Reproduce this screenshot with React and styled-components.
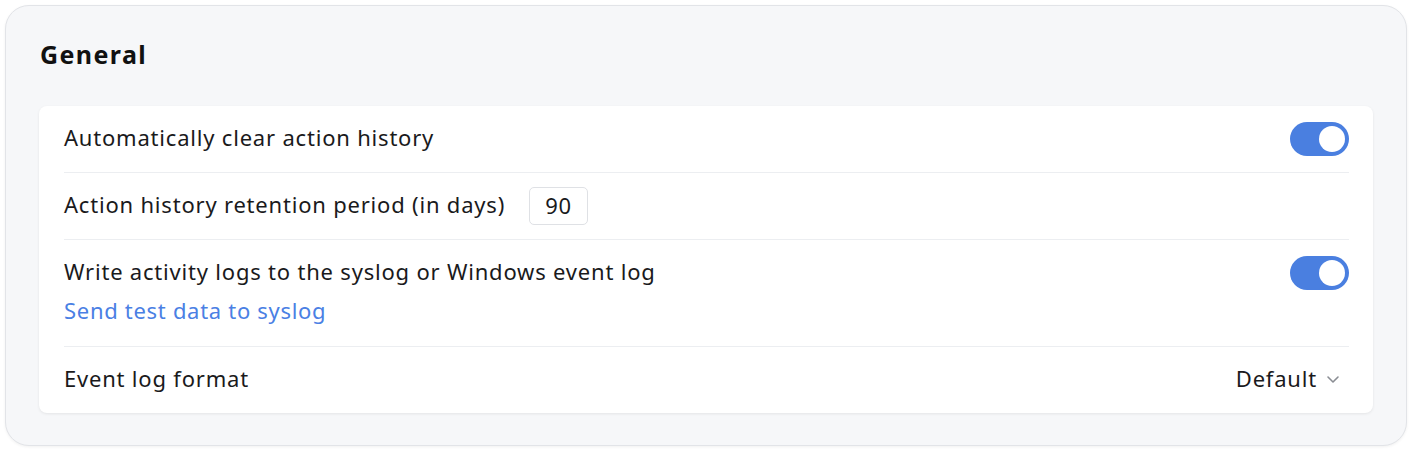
import React from "react";
import styled, { createGlobalStyle } from "styled-components";

const Global = createGlobalStyle`
  html, body { margin: 0; padding: 0; background: #ffffff; }
  body { font-family: "Noto Sans", "Open Sans", sans-serif; color: #1d1d1f; }
  * { box-sizing: border-box; }
`;

const Page = styled.div`
  padding: 5px 5px 6px 5px;
`;

const Panel = styled.section`
  background: #f6f7f9;
  border: 1px solid #e2e4e8;
  border-radius: 24px;
  box-shadow: 0 1px 3px rgba(0, 0, 0, 0.06);
  padding: 30px 33px 32px 33px;
  height: 441px;
`;

const Title = styled.h2`
  margin: 0 0 34px 1px;
  font-size: 25px;
  line-height: 36px;
  font-weight: 700;
  letter-spacing: 1.4px;
  color: #111;
`;

const Card = styled.div`
  background: #fff;
  border-radius: 8px;
  box-shadow: 0 1px 3px rgba(0, 0, 0, 0.08);
  padding: 0 24px 0 25px;
`;

const Row = styled.div`
  display: flex;
  align-items: ${(p) => (p.$top ? "flex-start" : "center")};
  justify-content: space-between;
  min-height: ${(p) => p.$h || 67}px;
  padding: ${(p) => (p.$top ? "15px 0 0" : "0")};
  border-bottom: ${(p) => (p.$last ? "none" : "1px solid #eceef1")};
`;

const Label = styled.span`
  font-size: 22px;
  line-height: 32px;
  padding-bottom: ${(p) => (p.$flat ? 0 : 4)}px;
  letter-spacing: 0.8px;
  color: #1a1a1c;
`;

const LabelGroup = styled.div`
  display: flex;
  align-items: center;
  gap: 24px;
`;

const Stack = styled.div`
  display: flex;
  flex-direction: column;
  gap: 7px;
`;

const Link = styled.a`
  font-size: 22px;
  line-height: 32px;
  letter-spacing: 0.7px;
  color: #4a80e4;
  text-decoration: none;
  cursor: pointer;
`;

const NumberBox = styled.div`
  width: 59px;
  height: 38px;
  border: 1px solid #dfe1e5;
  border-radius: 5px;
  display: flex;
  align-items: center;
  justify-content: center;
  padding-bottom: 2px;
  font-size: 22px;
  letter-spacing: 0.8px;
  color: #1a1a1c;
`;

const Toggle = styled.div`
  width: 59px;
  height: 34px;
  margin-top: ${(p) => p.$mt || 0}px;
  border-radius: 17px;
  background: ${(p) => (p.$on ? "#4a7fe0" : "#c9ccd1")};
  position: relative;
  flex-shrink: 0;
  &::after {
    content: "";
    position: absolute;
    top: 4px;
    left: ${(p) => (p.$on ? "29px" : "4px")};
    width: 26px;
    height: 26px;
    border-radius: 50%;
    background: #fff;
  }
`;

const Select = styled.div`
  display: flex;
  align-items: center;
  gap: 9px;
  margin-right: 9px;
  padding-bottom: 5px;
  font-size: 22px;
  letter-spacing: 0.8px;
  color: #1a1a1c;
`;

const Chevron = () => (
  <svg width="14" height="14" viewBox="0 0 14 14" fill="none" style={{ marginTop: 3 }}>
    <path d="M2 5l5 5 5-5" stroke="#8a8d93" strokeWidth="1.6" strokeLinecap="round" strokeLinejoin="round" />
  </svg>
);

export default function App() {
  return (
    <>
      <Global />
      <Page>
        <Panel>
          <Title>General</Title>
          <Card>
            <Row>
              <Label>Automatically clear action history</Label>
              <Toggle $on />
            </Row>
            <Row>
              <LabelGroup>
                <Label>Action history retention period (in days)</Label>
                <NumberBox>90</NumberBox>
              </LabelGroup>
            </Row>
            <Row $top $h={107}>
              <Stack>
                <Label $flat>Write activity logs to the syslog or Windows event log</Label>
                <Link>Send test data to syslog</Link>
              </Stack>
              <Toggle $on $mt={1} />
            </Row>
            <Row $last $h={66}>
              <Label>Event log format</Label>
              <Select>
                Default
                <Chevron />
              </Select>
            </Row>
          </Card>
        </Panel>
      </Page>
    </>
  );
}
